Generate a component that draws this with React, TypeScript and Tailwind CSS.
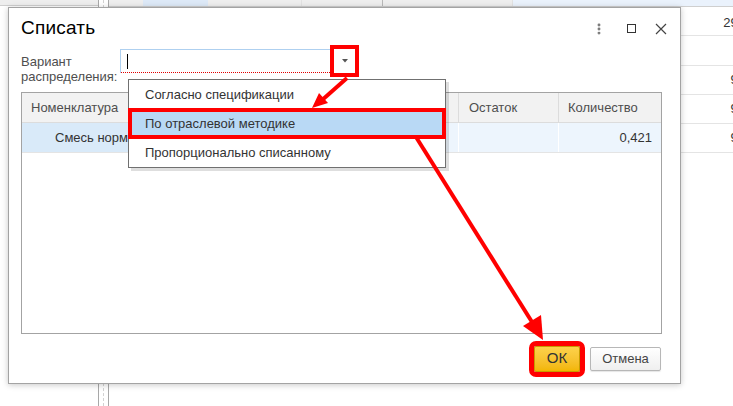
import { MoreVertical } from "lucide-react";

const font = { fontFamily: '"Liberation Sans", Arial, sans-serif' };

function Background() {
  return (
    <div className="flex h-full">
      <div className="w-[98px] shrink-0">
        <div className="h-[6px] bg-[#eeeeee] border-b border-[#cfcfcf]" />
      </div>
      <div className="w-[11px] shrink-0 border-x border-[#a8a8a8] flex">
        <div className="w-[5px] border-r border-dashed border-[#d2d2d2]" />
      </div>
      <div className="flex-1 flex flex-col">
        <div className="h-[7px] flex bg-[#eeeeee] border-b border-[#cfcfcf]">
          <div className="w-[34px]" />
          <div className="w-[65px] bg-[#dde9f7]" />
          <div className="w-[94px] border-r border-[#e2e2e2]" />
          <div className="w-[81px] border-r border-[#b8b8b8]" />
          <div className="w-[130px] border-r border-[#e2e2e2]" />
          <div className="flex-1 bg-[#eaf2fc]" />
        </div>
        <div className="flex-1 flex justify-end">
          <div className="w-[120px] -mr-[37px] text-[13px] text-[#333] flex flex-col">
            <div className="h-[29px] border-b border-[#e4e4e4] flex items-center justify-end pr-[7px] pt-[4px]">
              29,500
            </div>
            <div className="h-[30px] border-b border-[#e4e4e4]" />
            <div className="h-[29px] border-b border-[#e4e4e4] flex items-center justify-end pr-[7px]">
              9,000
            </div>
            <div className="h-[29px] border-b border-[#e4e4e4] flex items-center justify-end pr-[7px]">
              9,000
            </div>
            <div className="h-[29px] border-b border-[#e4e4e4] flex items-center justify-end pr-[7px]">
              9,000
            </div>
          </div>
        </div>
      </div>
    </div>
  );
}

function Dialog() {
  return (
    <div className="absolute left-[8px] top-[7px] w-[673px] h-[377px] bg-white border border-[#a3a3a3] shadow-[0_1px_6px_rgba(0,0,0,0.22)] flex flex-col">
      {/* header */}
      <div className="h-[41px] shrink-0 flex items-center pl-[12px] pr-[4px]">
        <div className="text-[19px] text-black tracking-[0.2px]">Списать</div>
        <div className="ml-auto flex items-center">
          <div className="w-[26px] mr-[4px] flex justify-center text-[#777]">
            <MoreVertical size={14} strokeWidth={3} />
          </div>
          <div className="w-[30px] flex justify-center">
            <div className="w-[9px] h-[9px] border border-[#333]" />
          </div>
          <div className="w-[30px] flex justify-center">
            <svg width="12" height="12" viewBox="0 0 12 12">
              <path d="M1 1 L11 11 M11 1 L1 11" stroke="#444" strokeWidth="1.2" />
            </svg>
          </div>
        </div>
      </div>

      {/* form row */}
      <div className="h-[43px] shrink-0 flex items-start pl-[12px]">
        <div className="w-[99px] pt-[5px] text-[13px] leading-[15px] text-[#4e4e4e]">
          Вариант
          <br />
          распределения:
        </div>
        <div className="w-[214px] h-[24px] border-t border-l border-[#aed0f0] flex flex-col">
          <div className="flex-1 flex items-center pl-[6px]">
            <div className="w-[1px] h-[15px] bg-black" />
          </div>
          <div className="h-0 border-b border-dotted border-[#e00000]" />
        </div>
        <div className="w-[21px] h-[24px] bg-white outline-[4px] outline-solid outline-[#ff0000] flex items-center justify-center">
          <svg width="6" height="4" viewBox="0 0 6 4">
            <path d="M0 0 L6 0 L3 3.5 Z" fill="#555" />
          </svg>
        </div>
      </div>

      {/* table */}
      <div className="ml-[12px] mr-[18px] h-[242px] shrink-0 border border-[#a3a3a3] text-[13px]">
        <div className="h-[30px] flex bg-[#f2f2f2] border-b border-[#dcdcdc] text-[#4e4e4e]">
          <div className="w-[279px] pl-[9px] flex items-center border-r border-[#dcdcdc]">
            Номенклатура
          </div>
          <div className="w-[158px] border-r border-[#dcdcdc]" />
          <div className="w-[100px] pl-[10px] flex items-center border-r border-[#dcdcdc]">
            Остаток
          </div>
          <div className="flex-1 pl-[9px] flex items-center">Количество</div>
        </div>
        <div className="h-[30px] flex bg-[#edf5fd] border-b border-[#e4e4e4] text-[#333]">
          <div className="w-[279px] pl-[33px] flex items-center bg-[#d9eaf9] border-r border-white">
            Смесь нормализованная
          </div>
          <div className="w-[158px] border-r border-white" />
          <div className="w-[100px] border-r border-white" />
          <div className="flex-1 pr-[9px] flex items-center justify-end">0,421</div>
        </div>
      </div>

      {/* footer */}
      <div className="flex-1 flex items-center justify-end pr-[19px] gap-[10px]">
        <button className="w-[46px] h-[26px] border border-[#c79c00] bg-linear-to-b from-[#fdd24a] to-[#f2b600] text-[15px] text-[#333] outline-[5px] outline-solid outline-[#ff0000] rounded-[2px]">
          ОК
        </button>
        <button className="w-[71px] h-[24px] rounded-[2px] border border-[#b7b7b7] bg-linear-to-b from-white to-[#efefef] text-[13px] text-[#444] shadow-[0_1px_1px_rgba(0,0,0,0.1)]">
          Отмена
        </button>
      </div>
    </div>
  );
}

function Popup() {
  const items = [
    "Согласно спецификации",
    "По отраслевой методике",
    "Пропорционально списанному",
  ];
  return (
    <div className="absolute left-[128px] top-[79px] w-[318px] bg-white border border-[#707070] shadow-[3px_3px_0_rgba(0,0,0,0.13)] text-[13px] text-[#333]">
      {items.map((it, i) => (
        <div
          key={it}
          className={
            i === 1
              ? "h-[29px] flex items-center pl-[16px] bg-[#b9d9f5] outline-[4px] outline-solid outline-[#ff0000] -outline-offset-[3px]"
              : "h-[29px] flex items-center pl-[16px]"
          }
        >
          {it}
        </div>
      ))}
    </div>
  );
}

function Arrows() {
  return (
    <svg
      className="absolute inset-0 pointer-events-none"
      width="733"
      height="406"
      viewBox="0 0 733 406"
    >
      <line x1="347" y1="78" x2="321" y2="101" stroke="#ff0000" strokeWidth="4" />
      <polygon points="312,108 328,103 319,93" fill="#ff0000" />
      <line x1="416" y1="137" x2="532" y2="322" stroke="#ff0000" strokeWidth="4" />
      <polygon points="543,340 523,326 541,315" fill="#ff0000" />
    </svg>
  );
}

export default function App() {
  return (
    <div
      className="relative w-[733px] h-[406px] overflow-hidden bg-white"
      style={font}
    >
      <Background />
      <Dialog />
      <Popup />
      <Arrows />
    </div>
  );
}
